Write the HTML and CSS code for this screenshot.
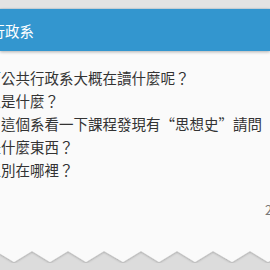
FILE: index.html
```html
<!DOCTYPE html>
<html lang="zh-Hant">
<head>
<meta charset="utf-8">
<link rel="stylesheet" href="styles.css">
</head>
<body>
<div class="page">
  <div class="statusbar"></div>
  <header class="appbar"><span class="title">公共行政系</span></header>
  <main class="sheet">
    <div class="body-text">
      <p class="line">下公共行政系大概在讀什麼呢？</p>
      <p class="line">人是什麼？</p>
      <p class="line">，這個系看一下課程發現有“思想史”請問</p>
      <p class="line">是什麼東西？</p>
      <p class="line">區別在哪裡？</p>
    </div>
    <div class="meta"><span class="date">2018-05-01</span></div>
  </main>
  <svg class="torn" width="290" height="14" viewBox="0 0 290 14" aria-hidden="true">
    <defs>
      <filter id="sh" x="-5%" y="-50%" width="110%" height="200%">
        <feDropShadow dx="0" dy="1" stdDeviation="1" flood-color="#000" flood-opacity="0.25"/>
      </filter>
    </defs>
    <path filter="url(#sh)" fill="#fafafa" stroke="#fafafa" stroke-width="2" stroke-linejoin="round"
      d="M0 0 H290 V1 L286 1 L268 12 L250 1 L232 12 L213 1 L195 12 L177 1 L159 12 L141 1 L123 12 L104 1 L86 12 L68 1 L50 12 L32 1 L14 12 L-4 1 Z"/>
  </svg>
</div>
</body>
</html>
```

FILE: styles.css
```css
html, body {
  margin: 0;
  padding: 0;
  width: 270px;
  height: 270px;
  overflow: hidden;
  background: #dcdcdc;
}

.page {
  display: flex;
  flex-direction: column;
  width: 270px;
  font-family: "Noto Sans CJK TC", "Noto Sans", sans-serif;
}

.statusbar {
  height: 8px;
  background: #e3e3e3;
  border-bottom: 1px solid #cfd9df;
}

.appbar {
  height: 42px;
  background: #3396cf;
  display: flex;
  align-items: center;
  box-shadow: 0 1px 3px rgba(0, 0, 0, 0.3);
  position: relative;
  z-index: 1;
  overflow: hidden;
}

.title {
  color: #ffffff;
  font-size: 14.5px;
  white-space: nowrap;
  margin-left: -38.5px;
}

.sheet {
  background: #fafafa;
  height: 199px;
  display: flex;
  flex-direction: column;
  overflow: hidden;
}

.body-text {
  padding-top: 15px;
  margin-left: -13.5px;
}

.line {
  margin: 0;
  font-size: 14.5px;
  line-height: 23px;
  color: #333333;
  white-space: nowrap;
}

.meta {
  margin-top: 20px;
  padding-left: 265px;
  font-size: 13px;
  line-height: 18px;
  color: #777777;
  white-space: nowrap;
}

.torn {
  display: block;
  margin-top: -1px;
}
```
